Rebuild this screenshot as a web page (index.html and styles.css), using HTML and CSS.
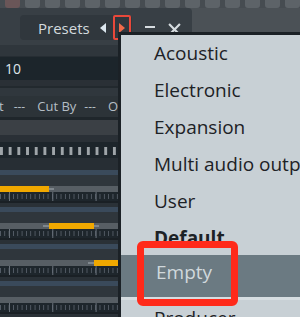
FILE: index.html
```html
<!DOCTYPE html>
<html lang="en">
<head>
  <meta charset="UTF-8">
  <title>Presets Menu</title>
<link rel="stylesheet" href="styles.css">
</head>
<body>
  <div class="screen">
    <!-- Keys of the window behind -->
    <div class="keys">
      <span class="key key-red"></span>
      <span class="key"></span><span class="key"></span><span class="key"></span>
      <span class="key"></span><span class="key"></span><span class="key"></span>
      <span class="key"></span><span class="key"></span><span class="key"></span>
      <span class="key"></span><span class="key"></span><span class="key"></span>
      <span class="key"></span><span class="key"></span>
    </div>

    <div class="header">
      <div class="titlebar">
        <div class="presets">
          <span class="presets-label">Presets</span>
          <span class="arrow arrow-left"></span>
          <span class="arrow-box"><span class="arrow arrow-right"></span></span>
        </div>
        <span class="win-btn minus"></span>
        <svg class="win-btn close" width="12" height="12" viewBox="0 0 12 12">
          <path d="M1 1 L11 11 M11 1 L1 11" stroke="#d6dce0" stroke-width="2" fill="none"/>
        </svg>
      </div>
      <div class="header-rest"></div>
    </div>

    <!-- Plugin panel under the menu -->
    <div class="plugin">
      <div class="band band-top"></div>
      <div class="band band-line"></div>
      <div class="value-row">10</div>
      <div class="band band-b"></div>
      <div class="band band-c"></div>
      <div class="band band-d"></div>
      <div class="label-row">
        <span class="lbl lbl-1">t</span>
        <span class="lbl dash">---</span>
        <span class="lbl lbl-3">Cut By</span>
        <span class="lbl dash">---</span>
        <span class="lbl">Output</span>
      </div>
      <div class="band band-e"></div>
      <div class="band band-f"></div>
      <div class="band band-g"></div>
      <div class="steps"></div>
      <div class="band band-h"></div>

      <div class="track">
        <div class="track-blue"></div>
        <div class="track-gap"></div>
        <div class="lane">
          <span class="handle" style="left: 44px;"></span>
          <span class="clip" style="left: 0; width: 49px;"></span>
        </div>
        <div class="ruler"></div>
        <div class="track-sep"></div>
      </div>
      <div class="track">
        <div class="track-blue"></div>
        <div class="track-gap"></div>
        <div class="lane">
          <span class="handle" style="left: 43px;"></span>
          <span class="handle" style="left: 89px;"></span>
          <span class="clip" style="left: 49px; width: 45px;"></span>
        </div>
        <div class="ruler"></div>
        <div class="track-sep"></div>
      </div>
      <div class="track">
        <div class="track-blue"></div>
        <div class="track-gap"></div>
        <div class="lane">
          <span class="handle" style="left: 88px;"></span>
          <span class="clip" style="left: 94px; width: 30px;"></span>
        </div>
        <div class="ruler"></div>
        <div class="track-sep"></div>
      </div>
      <div class="track">
        <div class="track-blue"></div>
        <div class="track-gap"></div>
        <div class="lane"></div>
        <div class="ruler"></div>
        <div class="track-sep"></div>
      </div>
    </div>

    <!-- Presets dropdown -->
    <ul class="menu">
      <li>Acoustic</li>
      <li>Electronic</li>
      <li>Expansion</li>
      <li>Multi audio outputs</li>
      <li>User</li>
      <li class="bold">Default</li>
      <li class="active">Empty</li>
      <li>Producer</li>
    </ul>

    <div class="mark"></div>
  </div>
</body>
</html>
```

FILE: styles.css
```css
body {
  margin: 0;
  background: #2a3137;
  font-family: 'Open Sans', sans-serif;
}

.screen {
  position: relative;
  width: 300px;
  height: 317px;
  overflow: hidden;
  background: #4b5156;
}

.keys {
  display: flex;
  gap: 5px;
  height: 8px;
  padding-left: 5px;
  background: #464c51;
  overflow: hidden;
}

.key {
  flex: none;
  width: 15px;
  height: 8px;
  border-radius: 0 0 3px 3px;
  background: #5d6368;
}

.key-red {
  background: #6a5658;
}

.header {
  display: flex;
  height: 37px;
}

.titlebar {
  display: flex;
  align-items: flex-start;
  width: 192px;
  background: #383f45;
  border-top-right-radius: 4px;
}

.header-rest {
  flex: 1;
  background: #4b5156;
}

.presets {
  display: flex;
  align-items: center;
  margin: 7px 0 0 20px;
  padding-left: 18px;
  width: 94px;
  height: 25px;
  border-radius: 4px;
  background: #30373d;
}

.presets-label {
  color: #d3dade;
  font-size: 15px;
  margin-right: 10px;
}

.arrow {
  width: 0;
  height: 0;
  border-top: 5px solid transparent;
  border-bottom: 5px solid transparent;
}

.arrow-left {
  border-right: 6px solid #dbe6ee;
}

.arrow-box {
  display: flex;
  align-items: center;
  justify-content: center;
  margin-left: 7px;
  width: 18px;
  height: 25px;
  box-sizing: border-box;
  border: 2px solid #e8483a;
  border-radius: 2px;
}

.arrow-right {
  border-left: 6px solid #f06a4a;
}

.win-btn {
  flex: none;
}

.minus {
  width: 10px;
  height: 2px;
  margin: 18px 0 0 13px;
  background: #d6dce0;
}

.close {
  width: 13px;
  height: 13px;
  margin: 15px 0 0 13px;
}

.plugin {
  width: 300px;
  background: #2e353b;
}

.band-top { height: 11px; background: #2f363c; }
.band-line { height: 1px; background: #262d33; }
.band-b { height: 6px; background: #2a3036; }
.band-c { height: 2px; background: #22292e; }
.band-d { height: 8px; background: #30373d; }
.band-e { height: 3px; background: #1f262b; }
.band-f { height: 15px; background: #3b4045; }
.band-g { height: 7px; background: #2a3036; }
.band-h { height: 12px; background: #272e34; }

.value-row {
  height: 23px;
  line-height: 23px;
  padding-left: 5px;
  background: #1c252b;
  color: #dfe6ea;
  font-size: 14px;
}

.label-row {
  display: flex;
  height: 21px;
  line-height: 21px;
  background: #2c3338;
  color: #b4bec5;
  font-size: 13px;
  white-space: nowrap;
}

.lbl-1 { margin-left: -1px; margin-right: 10px; }
.lbl-3 { margin-right: 8px; }

.dash {
  font-size: 12px;
  margin-right: 12px;
}

.steps {
  height: 16px;
  background:
    linear-gradient(90deg, #9fa5a9 3px, transparent 3px) 0 5px / 8.7px 8px repeat-x,
    #1d252b;
}

.track {
  height: 37px;
}

.track-blue { height: 5px; background: #3a4a5b; }
.track-gap { height: 11px; background: #2f363c; }
.track-sep {
  height: 6px;
  background: #2a3137;
  border-top: 2px solid #1a2025;
  box-sizing: border-box;
}

.lane {
  position: relative;
  height: 6px;
  background: #575e64;
}

.clip {
  position: absolute;
  top: 0;
  height: 6px;
  background: #f0a800;
}

.handle {
  position: absolute;
  top: 2px;
  width: 10px;
  height: 2px;
  background: #7f878d;
}

.ruler {
  height: 9px;
  background:
    linear-gradient(90deg, #69717a 1px, transparent 1px) 9px 0 / 43.3px 9px repeat-x,
    linear-gradient(90deg, #58606a 1px, transparent 1px) 0 2px / 4.33px 5px repeat-x,
    #1e262c;
}

.menu {
  position: absolute;
  left: 118px;
  top: 32px;
  right: 0;
  bottom: 0;
  margin: 0;
  padding: 0;
  list-style: none;
  background: #c8d0d5;
  border-top: 3px solid #1b2126;
  border-left: 3px solid #1b2126;
}

.menu li {
  height: 37px;
  line-height: 37px;
  padding-left: 33px;
  color: #1d2226;
  font-size: 19px;
  white-space: nowrap;
}

.menu .bold {
  font-weight: 700;
}

.menu .active {
  height: 42px;
  line-height: 34px;
  margin-top: -2px;
  padding-left: 35px;
  background: #6b7a82;
  color: #d0d8dc;
  border-bottom: 3px solid #d6dde1;
}

.mark {
  position: absolute;
  left: 137px;
  top: 241px;
  width: 101px;
  height: 65px;
  box-sizing: border-box;
  border: 7px solid #ff2a1a;
  border-radius: 6px;
}
```
